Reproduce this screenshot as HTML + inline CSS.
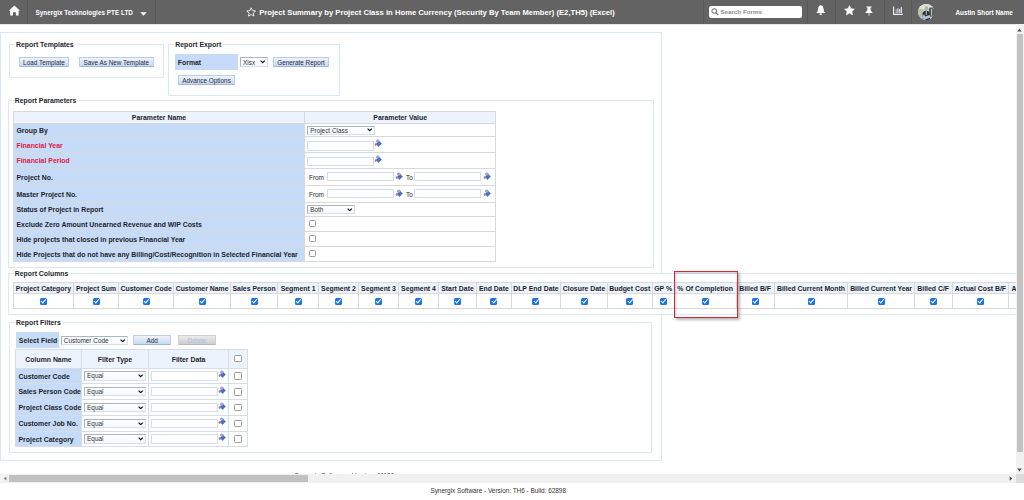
<!DOCTYPE html>
<html><head><meta charset="utf-8">
<style>
html,body{margin:0;padding:0;width:1024px;height:500px;overflow:hidden;background:#fff;}
body{position:relative;font-family:"Liberation Sans",sans-serif;}
.a{position:absolute;box-sizing:border-box;}
.t{position:absolute;white-space:nowrap;font-family:"Liberation Sans",sans-serif;font-weight:bold;font-size:6.9px;color:#1e1e2a;line-height:8px;}
.r{font-weight:normal;font-size:6.4px;}
.hdr{left:0;top:0;width:1024px;height:24px;background:#636363;}
.sep{position:absolute;top:0;width:1px;height:24px;background:#575757;}
.ht{position:absolute;white-space:nowrap;font-weight:bold;color:#fff;font-size:6.4px;line-height:8px;}
.fs{position:absolute;box-sizing:border-box;border:1px solid #dae7f8;background:#fff;}
.lg{position:absolute;white-space:nowrap;font-weight:bold;font-size:6.9px;color:#231f2a;line-height:8px;background:#fff;padding:0 1px;}
.btn{position:absolute;box-sizing:border-box;border:1px solid #bccde4;border-bottom-color:#a3b6d0;border-radius:1px;background:linear-gradient(#eef4fc,#c6d9f3);font-size:6.4px;color:#2a2a3a;text-align:center;line-height:8px;white-space:nowrap;}
.cell{position:absolute;box-sizing:border-box;}
.blue{background:#c6dbf7;}
.hl{position:absolute;height:1px;background:#d2d2d2;}
.vl{position:absolute;width:1px;background:#d2d2d2;}
.inp{position:absolute;box-sizing:border-box;border:1px solid #d0def1;background:#fff;}
.sel{position:absolute;box-sizing:border-box;border:1px solid #d3dfee;border-top-color:#aab6c6;border-left-color:#aab6c6;background:linear-gradient(#fff,#f4f8fd);font-size:6.4px;color:#333;line-height:7px;padding-left:2px;white-space:nowrap;}
.cb{position:absolute;width:7px;height:7px;border-radius:1.5px;background:#1a73e8;}
.cb:after{content:"";position:absolute;left:2.3px;top:0.6px;width:1.6px;height:3.6px;border-right:1.2px solid #fff;border-bottom:1.2px solid #fff;transform:rotate(40deg);}
.ucb{position:absolute;box-sizing:border-box;width:7.3px;height:7.3px;border-radius:1.5px;border:1px solid #9a9a9a;background:#fff;}
.lk{position:absolute;width:8px;height:8px;}
.red{color:#e3173e;}
</style></head><body>

<!-- HEADER -->
<div class="a hdr"></div>
<div class="a" style="left:0;top:24px;width:1024px;height:1px;background:#e6e6e6"></div>
<div class="sep" style="left:27px"></div>
<div class="sep" style="left:155px"></div>
<div class="sep" style="left:703px"></div>
<div class="sep" style="left:807px"></div>
<div class="sep" style="left:835px"></div>
<div class="sep" style="left:884px"></div>
<div class="sep" style="left:911px"></div>

<svg class="a" style="left:8px;top:4.8px" width="13" height="11" viewBox="0 0 13 11">
 <path d="M6.4 0.6 L12 5.7 L10.6 5.7 L10.6 10.6 L7.9 10.6 L7.9 7.2 L5 7.2 L5 10.6 L2.2 10.6 L2.2 5.7 L0.8 5.7 Z" fill="#fff"/>
</svg>
<div class="ht" style="left:35.5px;top:8.5px;font-size:6.4px">Synergix Technologies PTE LTD</div>
<svg class="a" style="left:140px;top:12px" width="7" height="4" viewBox="0 0 7 4"><path d="M0.3 0.2 L6.7 0.2 L3.5 3.8 Z" fill="#fff"/></svg>
<svg class="a" style="left:246.2px;top:6.8px" width="10.4" height="10.4" viewBox="0 0 24 24"><path d="M12 1.8 L15 8.3 L22.2 9.1 L16.8 13.9 L18.3 21 L12 17.4 L5.7 21 L7.2 13.9 L1.8 9.1 L9 8.3 Z" fill="none" stroke="#fff" stroke-width="1.9" stroke-linejoin="round"/></svg>
<div class="ht" style="left:259.2px;top:7.5px;font-size:7.67px;line-height:9px">Project Summary by Project Class in Home Currency (Security By Team Member) (E2,TH5) (Excel)</div>
<div class="a" style="left:709px;top:6px;width:92.5px;height:12px;background:#fff;border-radius:2px"></div>
<svg class="a" style="left:710.8px;top:8.3px" width="8" height="8" viewBox="0 0 8 8"><circle cx="3.2" cy="3" r="2.3" fill="none" stroke="#7c7c7c" stroke-width="1.05"/><path d="M4.9 4.7 L7 6.7" stroke="#7c7c7c" stroke-width="1.2" stroke-linecap="round"/></svg>
<div class="ht" style="left:720.3px;top:8.4px;color:#8a8a8a;font-size:6.25px">Search Forms</div>
<svg class="a" style="left:816px;top:5px" width="10" height="11" viewBox="0 0 10 11"><path d="M4.8 0.3 C6.4 0.3 7.3 1.8 7.6 4 L8 6.4 C8.3 7.1 8.9 7.5 9.3 7.9 L0.3 7.9 C0.7 7.5 1.3 7.1 1.6 6.4 L2 4 C2.3 1.8 3.2 0.3 4.8 0.3 Z" fill="#fff"/><ellipse cx="4.8" cy="9.2" rx="1.2" ry="0.9" fill="#fff"/></svg>
<svg class="a" style="left:844px;top:5px" width="11" height="11" viewBox="0 0 24 24"><path d="M12 1.5 L15.2 8.2 L22.5 9 L17.1 14 L18.5 21.3 L12 17.6 L5.5 21.3 L6.9 14 L1.5 9 L8.8 8.2 Z" fill="#fff" stroke="#fff" stroke-width="1.5" stroke-linejoin="round"/></svg>
<svg class="a" style="left:865px;top:6px" width="8" height="10" viewBox="0 0 8 10"><path d="M1.5 0.5 L6.5 0.5 L6.5 1.5 L5.6 1.5 L5.6 4.3 L7.4 6.2 L7.4 7 L4.4 7 L4.4 9.8 L3.6 9.8 L3.6 7 L0.6 7 L0.6 6.2 L2.4 4.3 L2.4 1.5 L1.5 1.5 Z" fill="#fff"/></svg>
<svg class="a" style="left:893px;top:6px" width="10" height="9" viewBox="0 0 10 9"><path d="M0.6 0.6 L0.6 8.4 L9.9 8.4" fill="none" stroke="#f4f4f4" stroke-width="1.1"/><rect x="2.6" y="3.4" width="1.2" height="3.6" fill="#b4b8e0"/><rect x="4.3" y="2.2" width="1.2" height="4.8" fill="#e0c4f0"/><rect x="6" y="3" width="1.2" height="4" fill="#c8d4f4"/><rect x="7.7" y="1.2" width="1.2" height="5.8" fill="#eef0e0"/></svg>
<svg class="a" style="left:918px;top:3.6px" width="16.2" height="16.2" viewBox="0 0 32 32"><defs><clipPath id="cc"><circle cx="16" cy="16" r="16"/></clipPath></defs><g clip-path="url(#cc)">
<rect width="32" height="32" fill="#c4cabd"/>
<rect x="0" y="0" width="32" height="10" fill="#dfe2dc"/>
<rect x="0" y="10" width="9" height="16" fill="#b7c3a6"/>
<rect x="22" y="7" width="10" height="18" fill="#4a5e4f"/>
<rect x="26" y="9" width="2" height="14" fill="#c7d0c6"/>
<ellipse cx="16.5" cy="8.5" rx="3.6" ry="4.6" fill="#b9b3ad"/>
<path d="M8 32 L9 18 C11 14.5 13.5 13.5 16.5 13.5 C19.5 13.5 22 15 23 18 L24 32 Z" fill="#2b313c"/>
<path d="M8 32 L8.5 22 L13 21 L15 32 Z" fill="#a9b8d8"/>
<path d="M12 25 L23 21.5 L25 26.5 L15 30 Z" fill="#b6c3dd"/>
<rect x="15.2" y="13.5" width="2.6" height="8" fill="#98a3b5"/>
</g></svg>
<div class="ht" style="left:955.4px;top:8.5px;font-size:6.4px">Austin Short Name</div>


<!-- BODY -->
<div class="a" style="left:0px;top:32px;width:661.5px;height:429px;border:1px solid #d9e6f8"></div>
<div class="fs" style="left:9px;top:43.5px;width:155px;height:34.5px"></div>
<div class="lg" style="left:15px;top:40.95px">Report Templates</div>
<div class="btn" style="left:19px;top:57px;width:50px;height:10px;line-height:10.2px;">Load Template</div>
<div class="btn" style="left:79px;top:57px;width:74.5px;height:10px;line-height:10.2px;">Save As New Template</div>
<div class="fs" style="left:168px;top:43.5px;width:171.5px;height:52.0px"></div>
<div class="lg" style="left:174.3px;top:40.95px">Report Export</div>
<div class="a" style="left:175px;top:54px;width:63px;height:16px;background:#c6dbf7"></div>
<div class="t" style="left:177.8px;top:58.900000000000006px;line-height:8px;">Format</div>
<div class="sel" style="left:240px;top:57.3px;width:28px;height:9.400000000000006px;line-height:9.500000000000005px">Xlsx<svg style="position:absolute;right:1.6px;top:2.1000000000000028px" width="5.4" height="3.4" viewBox="0 0 5.4 3.4"><path d="M0.6 0.6 L2.7 2.7 L4.8 0.6" fill="none" stroke="#161616" stroke-width="1.25"/></svg></div>
<div class="btn" style="left:273px;top:57.3px;width:56px;height:9.700000000000003px;line-height:9.900000000000002px;">Generate Report</div>
<div class="btn" style="left:178px;top:74.5px;width:57px;height:10.099999999999994px;line-height:10.299999999999994px;">Advance Options</div>
<div class="fs" style="left:8px;top:99.5px;width:646px;height:168.5px"></div>
<div class="lg" style="left:13.7px;top:96.95px">Report Parameters</div>
<div class="a" style="left:13.3px;top:111.3px;width:291.45px;height:11.700000000000003px;background:#ecf3fd"></div>
<div class="a" style="left:304.75px;top:111.3px;width:190.85000000000002px;height:11.700000000000003px;background:#ecf3fd"></div>
<div class="a" style="left:13.3px;top:123px;width:291.45px;height:13.5px;background:#c6dbf7"></div>
<div class="a" style="left:13.3px;top:136.5px;width:291.45px;height:16.0px;background:#c6dbf7"></div>
<div class="a" style="left:13.3px;top:152.5px;width:291.45px;height:15.75px;background:#c6dbf7"></div>
<div class="a" style="left:13.3px;top:168.25px;width:291.45px;height:17.0px;background:#c6dbf7"></div>
<div class="a" style="left:13.3px;top:185.25px;width:291.45px;height:17.25px;background:#c6dbf7"></div>
<div class="a" style="left:13.3px;top:202.5px;width:291.45px;height:14.25px;background:#c6dbf7"></div>
<div class="a" style="left:13.3px;top:216.75px;width:291.45px;height:15.0px;background:#c6dbf7"></div>
<div class="a" style="left:13.3px;top:231.75px;width:291.45px;height:15.0px;background:#c6dbf7"></div>
<div class="a" style="left:13.3px;top:246.75px;width:291.45px;height:14.75px;background:#c6dbf7"></div>
<div class="a" style="left:13.3px;top:110.8px;width:482.3px;height:1.0px;background:#d9d9d9"></div>
<div class="a" style="left:13.3px;top:122.5px;width:482.3px;height:1.0px;background:#d9d9d9"></div>
<div class="a" style="left:13.3px;top:136.0px;width:482.3px;height:1.0px;background:#d9d9d9"></div>
<div class="a" style="left:13.3px;top:152.0px;width:482.3px;height:1.0px;background:#d9d9d9"></div>
<div class="a" style="left:13.3px;top:167.75px;width:482.3px;height:1.0px;background:#d9d9d9"></div>
<div class="a" style="left:13.3px;top:184.75px;width:482.3px;height:1.0px;background:#d9d9d9"></div>
<div class="a" style="left:13.3px;top:202.0px;width:482.3px;height:1.0px;background:#d9d9d9"></div>
<div class="a" style="left:13.3px;top:216.25px;width:482.3px;height:1.0px;background:#d9d9d9"></div>
<div class="a" style="left:13.3px;top:231.25px;width:482.3px;height:1.0px;background:#d9d9d9"></div>
<div class="a" style="left:13.3px;top:246.25px;width:482.3px;height:1.0px;background:#d9d9d9"></div>
<div class="a" style="left:13.3px;top:261.0px;width:482.3px;height:1.0px;background:#d9d9d9"></div>
<div class="a" style="left:12.8px;top:111.3px;width:1.0px;height:150.2px;background:#d9d9d9"></div>
<div class="a" style="left:304.25px;top:111.3px;width:1.0px;height:150.2px;background:#d9d9d9"></div>
<div class="a" style="left:495.1px;top:111.3px;width:1.0px;height:150.2px;background:#d9d9d9"></div>
<div class="t" style="left:13.3px;width:291.45px;text-align:center;top:113.9px;line-height:8px;">Parameter Name</div>
<div class="t" style="left:304.75px;width:190.85000000000002px;text-align:center;top:113.9px;line-height:8px;">Parameter Value</div>
<div class="t" style="left:16.5px;top:127.14999999999999px;line-height:8px;">Group By</div>
<div class="t" style="left:16.5px;top:141.89999999999998px;line-height:8px;"><span class="red">Financial Year</span></div>
<div class="t" style="left:16.5px;top:157.075px;line-height:8px;"><span class="red">Financial Period</span></div>
<div class="t" style="left:16.5px;top:174.14999999999998px;line-height:8px;">Project No.</div>
<div class="t" style="left:16.5px;top:190.575px;line-height:8px;">Master Project No.</div>
<div class="t" style="left:16.5px;top:206.325px;line-height:8px;">Status of Project in Report</div>
<div class="t" style="left:16.5px;top:220.95px;line-height:8px;">Exclude Zero Amount Unearned Revenue and WIP Costs</div>
<div class="t" style="left:16.5px;top:235.95px;line-height:8px;">Hide projects that closed in previous Financial Year</div>
<div class="t" style="left:16.5px;top:250.825px;line-height:8px;">Hide Projects that do not have any Billing/Cost/Recognition in Selected Financial Year</div>
<div class="sel" style="left:307.25px;top:125.5px;width:67.25px;height:9.0px;line-height:7.9px">Project Class<svg style="position:absolute;right:1.6px;top:1.9px" width="5.4" height="3.4" viewBox="0 0 5.4 3.4"><path d="M0.6 0.6 L2.7 2.7 L4.8 0.6" fill="none" stroke="#161616" stroke-width="1.25"/></svg></div>
<div class="inp" style="left:307.25px;top:141.25px;width:67.0px;height:9.25px"></div>
<svg class="lk" style="left:374.2px;top:138.7px" width="8" height="8" viewBox="0 0 8 8"><path d="M5 1.8 L7.8 4.6 L4.6 7.8 L1.8 5 Z" fill="#3b72cc"/><path d="M0.4 5.4 L1.7 4.1 L2.9 6.3 L1.6 7.1 Z" fill="#d86a52"/><circle cx="3.9" cy="2.2" r="1.7" fill="#8c90c2"/><circle cx="3.9" cy="2" r="0.6" fill="#eef0fb"/><path d="M4 7.4 L4.6 6.8 L5.2 7.6 L4.6 8 Z" fill="#5fae62"/></svg>
<div class="inp" style="left:307.25px;top:157px;width:67.0px;height:9.25px"></div>
<svg class="lk" style="left:374.2px;top:154.8px" width="8" height="8" viewBox="0 0 8 8"><path d="M5 1.8 L7.8 4.6 L4.6 7.8 L1.8 5 Z" fill="#3b72cc"/><path d="M0.4 5.4 L1.7 4.1 L2.9 6.3 L1.6 7.1 Z" fill="#d86a52"/><circle cx="3.9" cy="2.2" r="1.7" fill="#8c90c2"/><circle cx="3.9" cy="2" r="0.6" fill="#eef0fb"/><path d="M4 7.4 L4.6 6.8 L5.2 7.6 L4.6 8 Z" fill="#5fae62"/></svg>
<div class="t r" style="left:309px;top:173.89999999999998px;line-height:8px;">From</div>
<div class="inp" style="left:326.5px;top:172px;width:67.0px;height:9.300000000000011px"></div>
<svg class="lk" style="left:395.4px;top:172.1px" width="8" height="8" viewBox="0 0 8 8"><path d="M5 1.8 L7.8 4.6 L4.6 7.8 L1.8 5 Z" fill="#3b72cc"/><path d="M0.4 5.4 L1.7 4.1 L2.9 6.3 L1.6 7.1 Z" fill="#d86a52"/><circle cx="3.9" cy="2.2" r="1.7" fill="#8c90c2"/><circle cx="3.9" cy="2" r="0.6" fill="#eef0fb"/><path d="M4 7.4 L4.6 6.8 L5.2 7.6 L4.6 8 Z" fill="#5fae62"/></svg>
<div class="t r" style="left:406px;top:173.89999999999998px;line-height:8px;">To</div>
<div class="inp" style="left:414.2px;top:172px;width:67.30000000000001px;height:9.300000000000011px"></div>
<svg class="lk" style="left:483.3px;top:172.1px" width="8" height="8" viewBox="0 0 8 8"><path d="M5 1.8 L7.8 4.6 L4.6 7.8 L1.8 5 Z" fill="#3b72cc"/><path d="M0.4 5.4 L1.7 4.1 L2.9 6.3 L1.6 7.1 Z" fill="#d86a52"/><circle cx="3.9" cy="2.2" r="1.7" fill="#8c90c2"/><circle cx="3.9" cy="2" r="0.6" fill="#eef0fb"/><path d="M4 7.4 L4.6 6.8 L5.2 7.6 L4.6 8 Z" fill="#5fae62"/></svg>
<div class="t r" style="left:309px;top:190.89999999999998px;line-height:8px;">From</div>
<div class="inp" style="left:326.5px;top:189px;width:67.0px;height:9.300000000000011px"></div>
<svg class="lk" style="left:395.4px;top:189.1px" width="8" height="8" viewBox="0 0 8 8"><path d="M5 1.8 L7.8 4.6 L4.6 7.8 L1.8 5 Z" fill="#3b72cc"/><path d="M0.4 5.4 L1.7 4.1 L2.9 6.3 L1.6 7.1 Z" fill="#d86a52"/><circle cx="3.9" cy="2.2" r="1.7" fill="#8c90c2"/><circle cx="3.9" cy="2" r="0.6" fill="#eef0fb"/><path d="M4 7.4 L4.6 6.8 L5.2 7.6 L4.6 8 Z" fill="#5fae62"/></svg>
<div class="t r" style="left:406px;top:190.89999999999998px;line-height:8px;">To</div>
<div class="inp" style="left:414.2px;top:189px;width:67.30000000000001px;height:9.300000000000011px"></div>
<svg class="lk" style="left:483.3px;top:189.1px" width="8" height="8" viewBox="0 0 8 8"><path d="M5 1.8 L7.8 4.6 L4.6 7.8 L1.8 5 Z" fill="#3b72cc"/><path d="M0.4 5.4 L1.7 4.1 L2.9 6.3 L1.6 7.1 Z" fill="#d86a52"/><circle cx="3.9" cy="2.2" r="1.7" fill="#8c90c2"/><circle cx="3.9" cy="2" r="0.6" fill="#eef0fb"/><path d="M4 7.4 L4.6 6.8 L5.2 7.6 L4.6 8 Z" fill="#5fae62"/></svg>
<div class="sel" style="left:307.25px;top:205px;width:47.5px;height:9.25px;line-height:8.15px">Both<svg style="position:absolute;right:1.6px;top:2.025px" width="5.4" height="3.4" viewBox="0 0 5.4 3.4"><path d="M0.6 0.6 L2.7 2.7 L4.8 0.6" fill="none" stroke="#161616" stroke-width="1.25"/></svg></div>
<div class="ucb" style="left:309px;top:220px"></div>
<div class="ucb" style="left:309px;top:235px"></div>
<div class="ucb" style="left:309px;top:250px"></div>
<div class="fs" style="left:7.5px;top:272.5px;width:1022.5px;height:42.0px"></div>
<div class="lg" style="left:13.75px;top:269.95px">Report Columns</div>
<div class="a" style="left:13.4px;top:282.25px;width:1046.6px;height:11.25px;background:#ecf3fd"></div>
<div class="a" style="left:13.4px;top:281.75px;width:1046.6px;height:1.0px;background:#d9d9d9"></div>
<div class="a" style="left:13.4px;top:293.0px;width:1046.6px;height:1.0px;background:#d9d9d9"></div>
<div class="a" style="left:13.4px;top:307.75px;width:1046.6px;height:1.0px;background:#d9d9d9"></div>
<div class="a" style="left:12.9px;top:282.25px;width:1.0px;height:26.0px;background:#d9d9d9"></div>
<div class="a" style="left:73.0px;top:282.25px;width:1.0px;height:26.0px;background:#d9d9d9"></div>
<div class="a" style="left:118.0px;top:282.25px;width:1.0px;height:26.0px;background:#d9d9d9"></div>
<div class="a" style="left:173.25px;top:282.25px;width:1.0px;height:26.0px;background:#d9d9d9"></div>
<div class="a" style="left:230.0px;top:282.25px;width:1.0px;height:26.0px;background:#d9d9d9"></div>
<div class="a" style="left:277.25px;top:282.25px;width:1.0px;height:26.0px;background:#d9d9d9"></div>
<div class="a" style="left:318.0px;top:282.25px;width:1.0px;height:26.0px;background:#d9d9d9"></div>
<div class="a" style="left:358.0px;top:282.25px;width:1.0px;height:26.0px;background:#d9d9d9"></div>
<div class="a" style="left:398.0px;top:282.25px;width:1.0px;height:26.0px;background:#d9d9d9"></div>
<div class="a" style="left:438.0px;top:282.25px;width:1.0px;height:26.0px;background:#d9d9d9"></div>
<div class="a" style="left:476.0px;top:282.25px;width:1.0px;height:26.0px;background:#d9d9d9"></div>
<div class="a" style="left:510.75px;top:282.25px;width:1.0px;height:26.0px;background:#d9d9d9"></div>
<div class="a" style="left:560.0px;top:282.25px;width:1.0px;height:26.0px;background:#d9d9d9"></div>
<div class="a" style="left:607.0px;top:282.25px;width:1.0px;height:26.0px;background:#d9d9d9"></div>
<div class="a" style="left:651.5px;top:282.25px;width:1.0px;height:26.0px;background:#d9d9d9"></div>
<div class="a" style="left:673.75px;top:282.25px;width:1.0px;height:26.0px;background:#d9d9d9"></div>
<div class="a" style="left:735.5px;top:282.25px;width:1.0px;height:26.0px;background:#d9d9d9"></div>
<div class="a" style="left:773.7px;top:282.25px;width:1.0px;height:26.0px;background:#d9d9d9"></div>
<div class="a" style="left:847.3px;top:282.25px;width:1.0px;height:26.0px;background:#d9d9d9"></div>
<div class="a" style="left:913.9px;top:282.25px;width:1.0px;height:26.0px;background:#d9d9d9"></div>
<div class="a" style="left:951.5px;top:282.25px;width:1.0px;height:26.0px;background:#d9d9d9"></div>
<div class="a" style="left:1008.4px;top:282.25px;width:1.0px;height:26.0px;background:#d9d9d9"></div>
<div class="a" style="left:1059.5px;top:282.25px;width:1.0px;height:26.0px;background:#d9d9d9"></div>
<div class="t" style="left:13.4px;width:60.1px;text-align:center;top:284.59999999999997px;line-height:8px;">Project Category</div>
<div class="cb" style="left:39.95px;top:297.7px"></div>
<div class="t" style="left:73.5px;width:45.0px;text-align:center;top:284.59999999999997px;line-height:8px;">Project Sum</div>
<div class="cb" style="left:92.5px;top:297.7px"></div>
<div class="t" style="left:118.5px;width:55.25px;text-align:center;top:284.59999999999997px;line-height:8px;">Customer Code</div>
<div class="cb" style="left:142.625px;top:297.7px"></div>
<div class="t" style="left:173.75px;width:56.75px;text-align:center;top:284.59999999999997px;line-height:8px;">Customer Name</div>
<div class="cb" style="left:198.625px;top:297.7px"></div>
<div class="t" style="left:230.5px;width:47.25px;text-align:center;top:284.59999999999997px;line-height:8px;">Sales Person</div>
<div class="cb" style="left:250.625px;top:297.7px"></div>
<div class="t" style="left:277.75px;width:40.75px;text-align:center;top:284.59999999999997px;line-height:8px;">Segment 1</div>
<div class="cb" style="left:294.625px;top:297.7px"></div>
<div class="t" style="left:318.5px;width:40.0px;text-align:center;top:284.59999999999997px;line-height:8px;">Segment 2</div>
<div class="cb" style="left:335.0px;top:297.7px"></div>
<div class="t" style="left:358.5px;width:40.0px;text-align:center;top:284.59999999999997px;line-height:8px;">Segment 3</div>
<div class="cb" style="left:375.0px;top:297.7px"></div>
<div class="t" style="left:398.5px;width:40.0px;text-align:center;top:284.59999999999997px;line-height:8px;">Segment 4</div>
<div class="cb" style="left:415.0px;top:297.7px"></div>
<div class="t" style="left:438.5px;width:38.0px;text-align:center;top:284.59999999999997px;line-height:8px;">Start Date</div>
<div class="cb" style="left:454.0px;top:297.7px"></div>
<div class="t" style="left:476.5px;width:34.75px;text-align:center;top:284.59999999999997px;line-height:8px;">End Date</div>
<div class="cb" style="left:490.375px;top:297.7px"></div>
<div class="t" style="left:511.25px;width:49.25px;text-align:center;top:284.59999999999997px;line-height:8px;">DLP End Date</div>
<div class="cb" style="left:532.375px;top:297.7px"></div>
<div class="t" style="left:560.5px;width:47.0px;text-align:center;top:284.59999999999997px;line-height:8px;">Closure Date</div>
<div class="cb" style="left:580.5px;top:297.7px"></div>
<div class="t" style="left:607.5px;width:44.5px;text-align:center;top:284.59999999999997px;line-height:8px;">Budget Cost</div>
<div class="cb" style="left:626.25px;top:297.7px"></div>
<div class="t" style="left:652px;width:22.25px;text-align:center;top:284.59999999999997px;line-height:8px;">GP %</div>
<div class="cb" style="left:659.625px;top:297.7px"></div>
<div class="t" style="left:674.25px;width:61.75px;text-align:center;top:284.59999999999997px;line-height:8px;">% Of Completion</div>
<div class="cb" style="left:701.625px;top:297.7px"></div>
<div class="t" style="left:736px;width:38.200000000000045px;text-align:center;top:284.59999999999997px;line-height:8px;">Billed B/F</div>
<div class="cb" style="left:751.6px;top:297.7px"></div>
<div class="t" style="left:774.2px;width:73.59999999999991px;text-align:center;top:284.59999999999997px;line-height:8px;">Billed Current Month</div>
<div class="cb" style="left:807.5px;top:297.7px"></div>
<div class="t" style="left:847.8px;width:66.60000000000002px;text-align:center;top:284.59999999999997px;line-height:8px;">Billed Current Year</div>
<div class="cb" style="left:877.5999999999999px;top:297.7px"></div>
<div class="t" style="left:914.4px;width:37.60000000000002px;text-align:center;top:284.59999999999997px;line-height:8px;">Billed C/F</div>
<div class="cb" style="left:929.7px;top:297.7px"></div>
<div class="t" style="left:952px;width:56.89999999999998px;text-align:center;top:284.59999999999997px;line-height:8px;">Actual Cost B/F</div>
<div class="cb" style="left:976.95px;top:297.7px"></div>
<div class="t" style="left:1011.4px;top:284.59999999999997px;line-height:8px;">Actual Cost</div>
<div class="a" style="left:674px;top:271px;width:64px;height:47px;border:1.4px solid #d42a35;box-shadow:inset 1px 1.5px 2px rgba(0,0,0,0.18),1.5px 1.5px 2.5px rgba(0,0,0,0.28)"></div>
<div class="fs" style="left:9.2px;top:322px;width:643.3px;height:130.5px"></div>
<div class="lg" style="left:15px;top:319.45px">Report Filters</div>
<div class="a" style="left:16px;top:331.8px;width:43px;height:16.19999999999999px;background:#c6dbf7"></div>
<div class="t" style="left:18.8px;top:336.9px;line-height:8px;">Select Field</div>
<div class="sel" style="left:60.8px;top:335.5px;width:67.50000000000001px;height:9.399999999999977px;line-height:8.299999999999978px">Customer Code<svg style="position:absolute;right:1.6px;top:2.0999999999999885px" width="5.4" height="3.4" viewBox="0 0 5.4 3.4"><path d="M0.6 0.6 L2.7 2.7 L4.8 0.6" fill="none" stroke="#161616" stroke-width="1.25"/></svg></div>
<div class="btn" style="left:133.3px;top:335.2px;width:37.599999999999994px;height:9.800000000000011px;line-height:10.00000000000001px;">Add</div>
<div class="btn" style="left:178px;top:335.2px;width:37.69999999999999px;height:9.800000000000011px;line-height:10.00000000000001px;background:linear-gradient(#ebebeb,#cdcdcd);border-color:#cfcfcf;border-bottom-color:#b8b8b8;color:#a9c3e8">Delete</div>
<div class="a" style="left:15.5px;top:349.2px;width:232.0px;height:18.80000000000001px;background:#ecf3fd"></div>
<div class="a" style="left:15.5px;top:368px;width:66.0px;height:15.699999999999989px;background:#c6dbf7"></div>
<div class="a" style="left:15.5px;top:383.7px;width:66.0px;height:15.900000000000034px;background:#c6dbf7"></div>
<div class="a" style="left:15.5px;top:399.6px;width:66.0px;height:16.0px;background:#c6dbf7"></div>
<div class="a" style="left:15.5px;top:415.6px;width:66.0px;height:15.399999999999977px;background:#c6dbf7"></div>
<div class="a" style="left:15.5px;top:431px;width:66.0px;height:15.699999999999989px;background:#c6dbf7"></div>
<div class="a" style="left:15.5px;top:348.7px;width:232.0px;height:1.0px;background:#d6dde6"></div>
<div class="a" style="left:15.5px;top:367.5px;width:232.0px;height:1.0px;background:#d6dde6"></div>
<div class="a" style="left:15.5px;top:383.2px;width:232.0px;height:1.0px;background:#d6dde6"></div>
<div class="a" style="left:15.5px;top:399.1px;width:232.0px;height:1.0px;background:#d6dde6"></div>
<div class="a" style="left:15.5px;top:415.1px;width:232.0px;height:1.0px;background:#d6dde6"></div>
<div class="a" style="left:15.5px;top:430.5px;width:232.0px;height:1.0px;background:#d6dde6"></div>
<div class="a" style="left:15.5px;top:446.2px;width:232.0px;height:1.0px;background:#d6dde6"></div>
<div class="a" style="left:15.0px;top:349.2px;width:1.0px;height:97.5px;background:#d6dde6"></div>
<div class="a" style="left:81.0px;top:349.2px;width:1.0px;height:97.5px;background:#d6dde6"></div>
<div class="a" style="left:148.0px;top:349.2px;width:1.0px;height:97.5px;background:#d6dde6"></div>
<div class="a" style="left:228.1px;top:349.2px;width:1.0px;height:97.5px;background:#d6dde6"></div>
<div class="a" style="left:247.0px;top:349.2px;width:1.0px;height:97.5px;background:#d6dde6"></div>
<div class="t" style="left:15.5px;width:66.0px;text-align:center;top:355.5px;line-height:8px;">Column Name</div>
<div class="t" style="left:81.5px;width:67.0px;text-align:center;top:355.5px;line-height:8px;">Filter Type</div>
<div class="t" style="left:148.5px;width:80.1px;text-align:center;top:355.5px;line-height:8px;">Filter Data</div>
<div class="ucb" style="left:234.4px;top:355.1px"></div>
<div class="t" style="left:18.5px;top:372.55px;line-height:8px;">Customer Code</div>
<div class="sel" style="left:84.1px;top:371.15000000000003px;width:61.599999999999994px;height:9.5px;line-height:8.4px">Equal<svg style="position:absolute;right:1.6px;top:2.15px" width="5.4" height="3.4" viewBox="0 0 5.4 3.4"><path d="M0.6 0.6 L2.7 2.7 L4.8 0.6" fill="none" stroke="#161616" stroke-width="1.25"/></svg></div>
<div class="inp" style="left:151.3px;top:371.35px;width:67.0px;height:9.300000000000011px"></div>
<svg class="lk" style="left:218.3px;top:369.85px" width="8" height="8" viewBox="0 0 8 8"><path d="M5 1.8 L7.8 4.6 L4.6 7.8 L1.8 5 Z" fill="#3b72cc"/><path d="M0.4 5.4 L1.7 4.1 L2.9 6.3 L1.6 7.1 Z" fill="#d86a52"/><circle cx="3.9" cy="2.2" r="1.7" fill="#8c90c2"/><circle cx="3.9" cy="2" r="0.6" fill="#eef0fb"/><path d="M4 7.4 L4.6 6.8 L5.2 7.6 L4.6 8 Z" fill="#5fae62"/></svg>
<div class="ucb" style="left:234.4px;top:372.45000000000005px"></div>
<div class="t" style="left:18.5px;top:388.34999999999997px;line-height:8px;">Sales Person Code</div>
<div class="sel" style="left:84.1px;top:386.95px;width:61.599999999999994px;height:9.5px;line-height:8.4px">Equal<svg style="position:absolute;right:1.6px;top:2.15px" width="5.4" height="3.4" viewBox="0 0 5.4 3.4"><path d="M0.6 0.6 L2.7 2.7 L4.8 0.6" fill="none" stroke="#161616" stroke-width="1.25"/></svg></div>
<div class="inp" style="left:151.3px;top:387.15px;width:67.0px;height:9.300000000000011px"></div>
<svg class="lk" style="left:218.3px;top:385.65px" width="8" height="8" viewBox="0 0 8 8"><path d="M5 1.8 L7.8 4.6 L4.6 7.8 L1.8 5 Z" fill="#3b72cc"/><path d="M0.4 5.4 L1.7 4.1 L2.9 6.3 L1.6 7.1 Z" fill="#d86a52"/><circle cx="3.9" cy="2.2" r="1.7" fill="#8c90c2"/><circle cx="3.9" cy="2" r="0.6" fill="#eef0fb"/><path d="M4 7.4 L4.6 6.8 L5.2 7.6 L4.6 8 Z" fill="#5fae62"/></svg>
<div class="ucb" style="left:234.4px;top:388.25px"></div>
<div class="t" style="left:18.5px;top:404.3px;line-height:8px;">Project Class Code</div>
<div class="sel" style="left:84.1px;top:402.90000000000003px;width:61.599999999999994px;height:9.5px;line-height:8.4px">Equal<svg style="position:absolute;right:1.6px;top:2.15px" width="5.4" height="3.4" viewBox="0 0 5.4 3.4"><path d="M0.6 0.6 L2.7 2.7 L4.8 0.6" fill="none" stroke="#161616" stroke-width="1.25"/></svg></div>
<div class="inp" style="left:151.3px;top:403.1px;width:67.0px;height:9.300000000000011px"></div>
<svg class="lk" style="left:218.3px;top:401.6px" width="8" height="8" viewBox="0 0 8 8"><path d="M5 1.8 L7.8 4.6 L4.6 7.8 L1.8 5 Z" fill="#3b72cc"/><path d="M0.4 5.4 L1.7 4.1 L2.9 6.3 L1.6 7.1 Z" fill="#d86a52"/><circle cx="3.9" cy="2.2" r="1.7" fill="#8c90c2"/><circle cx="3.9" cy="2" r="0.6" fill="#eef0fb"/><path d="M4 7.4 L4.6 6.8 L5.2 7.6 L4.6 8 Z" fill="#5fae62"/></svg>
<div class="ucb" style="left:234.4px;top:404.20000000000005px"></div>
<div class="t" style="left:18.5px;top:420.0px;line-height:8px;">Customer Job No.</div>
<div class="sel" style="left:84.1px;top:418.6px;width:61.599999999999994px;height:9.5px;line-height:8.4px">Equal<svg style="position:absolute;right:1.6px;top:2.15px" width="5.4" height="3.4" viewBox="0 0 5.4 3.4"><path d="M0.6 0.6 L2.7 2.7 L4.8 0.6" fill="none" stroke="#161616" stroke-width="1.25"/></svg></div>
<div class="inp" style="left:151.3px;top:418.8px;width:67.0px;height:9.300000000000011px"></div>
<svg class="lk" style="left:218.3px;top:417.3px" width="8" height="8" viewBox="0 0 8 8"><path d="M5 1.8 L7.8 4.6 L4.6 7.8 L1.8 5 Z" fill="#3b72cc"/><path d="M0.4 5.4 L1.7 4.1 L2.9 6.3 L1.6 7.1 Z" fill="#d86a52"/><circle cx="3.9" cy="2.2" r="1.7" fill="#8c90c2"/><circle cx="3.9" cy="2" r="0.6" fill="#eef0fb"/><path d="M4 7.4 L4.6 6.8 L5.2 7.6 L4.6 8 Z" fill="#5fae62"/></svg>
<div class="ucb" style="left:234.4px;top:419.90000000000003px"></div>
<div class="t" style="left:18.5px;top:435.55px;line-height:8px;">Project Category</div>
<div class="sel" style="left:84.1px;top:434.15000000000003px;width:61.599999999999994px;height:9.5px;line-height:8.4px">Equal<svg style="position:absolute;right:1.6px;top:2.15px" width="5.4" height="3.4" viewBox="0 0 5.4 3.4"><path d="M0.6 0.6 L2.7 2.7 L4.8 0.6" fill="none" stroke="#161616" stroke-width="1.25"/></svg></div>
<div class="inp" style="left:151.3px;top:434.35px;width:67.0px;height:9.300000000000011px"></div>
<svg class="lk" style="left:218.3px;top:432.85px" width="8" height="8" viewBox="0 0 8 8"><path d="M5 1.8 L7.8 4.6 L4.6 7.8 L1.8 5 Z" fill="#3b72cc"/><path d="M0.4 5.4 L1.7 4.1 L2.9 6.3 L1.6 7.1 Z" fill="#d86a52"/><circle cx="3.9" cy="2.2" r="1.7" fill="#8c90c2"/><circle cx="3.9" cy="2" r="0.6" fill="#eef0fb"/><path d="M4 7.4 L4.6 6.8 L5.2 7.6 L4.6 8 Z" fill="#5fae62"/></svg>
<div class="ucb" style="left:234.4px;top:435.45000000000005px"></div>
<div class="a" style="left:0;top:466px;width:1016px;height:8.5px;overflow:hidden"><div class="t r" style="left:294.5px;top:6px;color:#444">Synergix Software - Version: 61120</div></div>
<div class="a" style="left:1015.5px;top:24px;width:8.5px;height:450px;background:#f1f1f1"></div>
<div class="a" style="left:1016.5px;top:33.8px;width:6.5px;height:418.2px;background:#c1c1c1"></div>
<svg class="a" style="left:1017px;top:27.5px" width="5" height="4"><path d="M0.2 3.4 L4.8 3.4 L2.5 0.6 Z" fill="#505050"/></svg>
<svg class="a" style="left:1017px;top:467.5px" width="5" height="4"><path d="M0.2 0.6 L4.8 0.6 L2.5 3.4 Z" fill="#505050"/></svg>
<div class="a" style="left:0px;top:474px;width:1015.5px;height:9px;background:#f1f1f1"></div>
<div class="a" style="left:9.3px;top:475px;width:298.5px;height:7px;background:#c1c1c1"></div>
<svg class="a" style="left:2.8px;top:476px" width="4" height="5"><path d="M3.4 0.4 L3.4 4.6 L0.8 2.5 Z" fill="#808080"/></svg>
<svg class="a" style="left:1008.5px;top:476px" width="4" height="5"><path d="M0.6 0.2 L0.6 4.8 L3.4 2.5 Z" fill="#505050"/></svg>
<div class="a" style="left:1015.5px;top:474px;width:8.5px;height:9px;background:#dcdcdc"></div>
<div class="t r" style="left:430.4px;top:487px;color:#333;font-size:6.4px">Synergix Software - Version: TH6 - Build: 62898</div>
</body></html>
